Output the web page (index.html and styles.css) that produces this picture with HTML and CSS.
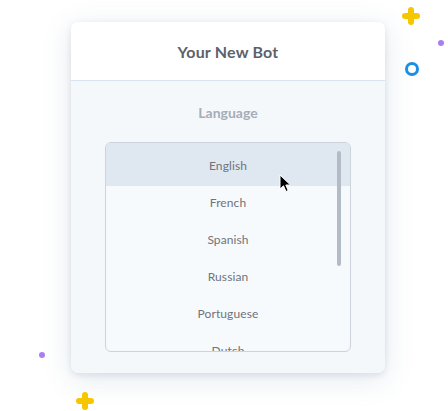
FILE: index.html
```html
<!DOCTYPE html>
<html>
<head>
<meta charset="utf-8">
<link rel="stylesheet" href="styles.css">
</head>
<body>
<div class="stage">
  <div class="card">
    <div class="card-head">Your New Bot</div>
    <div class="card-body">
      <div class="label">Language</div>
      <div class="listbox">
        <ul class="options">
          <li class="opt selected">English</li>
          <li class="opt">French</li>
          <li class="opt">Spanish</li>
          <li class="opt">Russian</li>
          <li class="opt">Portuguese</li>
          <li class="opt">Dutch</li>
        </ul>
        <div class="thumb"></div>
        <svg class="cursor" width="14" height="20" viewBox="0 0 14 20"><path d="M1 1 L1 15 L4.5 11.8 L7 17.5 L9.2 16.5 L6.8 11 L11.5 11 Z" fill="#000" stroke="#fff" stroke-width="1" stroke-linejoin="round"/></svg>
      </div>
    </div>
  </div>
  <span class="plus plus-tr"></span>
  <span class="dot dot-tr"></span>
  <span class="ring"></span>
  <span class="dot dot-bl"></span>
  <span class="plus plus-bl"></span>
</div>
</body>
</html>
```
FILE: styles.css
```css
html, body {
  margin: 0;
  padding: 0;
  background: #ffffff;
}
body {
  font-family: Lato, "Noto Sans", sans-serif;
}
.stage {
  position: relative;
  width: 448px;
  height: 411px;
  padding: 22px 0 0 71px;
  box-sizing: border-box;
  overflow: hidden;
}
.card {
  width: 314px;
  height: 351px;
  border-radius: 7px;
  background: #f5f8fb;
  box-shadow: 0 2px 6px rgba(40, 70, 100, 0.12), 0 6px 30px rgba(60, 100, 140, 0.14);
  overflow: hidden;
  display: flex;
  flex-direction: column;
}
.card-head {
  height: 58px;
  background: #ffffff;
  border-bottom: 1px solid #d7e3ee;
  display: flex;
  align-items: center;
  justify-content: center;
  font-weight: 700;
  font-size: 16px;
  color: #5c616b;
  letter-spacing: 0.2px;
}
.card-body {
  flex: 1;
  display: flex;
  flex-direction: column;
  align-items: center;
  padding-top: 24px;
}
.label {
  font-size: 14px;
  font-weight: 700;
  color: #a6adb9;
  line-height: 16px;
  height: 16px;
  margin-bottom: 21px;
}
.listbox {
  position: relative;
  width: 246px;
  height: 210px;
  box-sizing: border-box;
  border: 1px solid #cdd3da;
  border-radius: 6px;
  background: #f7fafc;
  overflow: hidden;
}
.options {
  list-style: none;
  margin: 0;
  padding: 0;
}
.opt {
  height: 37px;
  box-sizing: border-box;
  padding-top: 9px;
  line-height: 15px;
  text-align: center;
  font-size: 12px;
  color: #6e737c;
  letter-spacing: 0.1px;
}
.opt.selected {
  height: 43px;
  padding-top: 15px;
  background: #dfe8f1;
}
.thumb {
  position: absolute;
  right: 9px;
  top: 8px;
  width: 4px;
  height: 115px;
  border-radius: 2px;
  background: #b3bcc6;
}
.cursor {
  position: absolute;
  left: 173px;
  top: 31px;
}
.plus {
  position: absolute;
  width: 18px;
  height: 18px;
}
.plus::before, .plus::after {
  content: "";
  position: absolute;
  background: #f6c700;
  border-radius: 3px;
}
.plus::before {
  left: 0;
  top: 6px;
  width: 18px;
  height: 6px;
}
.plus::after {
  left: 6px;
  top: 0;
  width: 6px;
  height: 18px;
}
.plus-tr { left: 402px; top: 7px; }
.plus-bl { left: 76px; top: 392px; }
.dot {
  position: absolute;
  width: 6px;
  height: 6px;
  border-radius: 50%;
  background: #a97ef3;
}
.dot-tr { left: 438px; top: 40px; }
.dot-bl { left: 39px; top: 352px; }
.ring {
  position: absolute;
  left: 405px;
  top: 62px;
  width: 8px;
  height: 8px;
  border: 3px solid #1a8fe6;
  border-radius: 50%;
}
```
